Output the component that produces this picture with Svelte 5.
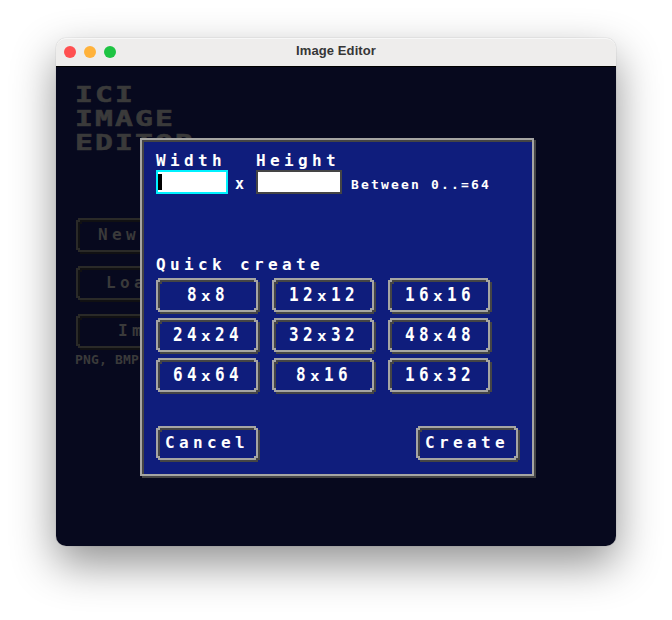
<script>
  const sizes = ['8x8', '12x12', '16x16', '24x24', '32x32', '48x48', '64x64', '8x16', '16x32'];

  // Stepped-corner outline made of two-pixel blocks.
  function outline(w, h, o) {
    const r = (x, y, a, b) => `M${x + o} ${y + o}h${a}v${b}h${-a}z`;
    return (
      r(2, 0, w - 4, 2) + r(2, h - 2, w - 4, 2) +
      r(0, 2, 2, h - 4) + r(w - 2, 2, 2, h - 4) +
      r(2, 2, 2, 2) + r(w - 4, 2, 2, 2) + r(2, h - 4, 2, 2) + r(w - 4, h - 4, 2, 2)
    );
  }
</script>

{#snippet frame(w)}
  <svg class="frame" width={w + 2} height="36" shape-rendering="crispEdges" aria-hidden="true">
    <path class="shade" d={outline(w, 34, 2)} />
    <path class="edge" d={outline(w, 34, 0)} />
  </svg>
{/snippet}

<main class="desktop">
  <section class="window">
    <header>
      <div class="lights"><i class="close"></i><i class="minimize"></i><i class="zoom"></i></div>
      <h1>Image Editor</h1>
    </header>
    <div class="content">
      <div class="menu">
        <h2><span>ICI</span><span>IMAGE</span><span>EDITOR</span></h2>
        <button class="new">{@render frame(182)}<span>New</span></button>
        <button class="load">{@render frame(182)}<span>Load</span></button>
        <button class="import">{@render frame(182)}<span>Import</span></button>
        <p>PNG, BMP</p>
      </div>
      <div class="dialog">
        <div class="fields">
          <div class="field first">
            <span class="label">Width</span>
            <div class="input focused"><i class="caret"></i></div>
          </div>
          <span class="times">x</span>
          <div class="field second">
            <span class="label">Height</span>
            <div class="input"></div>
          </div>
          <span class="hint">Between 0..=64</span>
        </div>
        <div class="label quick">Quick create</div>
        <div class="grid">
          {#each sizes as size}
            <button class="size">{@render frame(102)}<span class="digits">{size.split('x')[0]}<small>x</small>{size.split('x')[1]}</span></button>
          {/each}
        </div>
        <footer>
          <button>{@render frame(102)}<span>Cancel</span></button>
          <button>{@render frame(102)}<span>Create</span></button>
        </footer>
      </div>
    </div>
  </section>
</main>

<style>
  :global(body) { margin: 0; background: #fff; }
  * { box-sizing: border-box; }
  .desktop {
    width: 672px;
    height: 620px;
    padding: 38px 56px 74px;
    overflow: hidden;
    background: #fff;
    font-family: "DejaVu Sans Mono", monospace;
    font-weight: 700;
  }
  .window {
    height: 508px;
    border-radius: 10px;
    box-shadow: 0 0 1px rgba(0, 0, 0, 0.4), 0 18px 44px rgba(0, 0, 0, 0.43);
  }
  header {
    height: 28px;
    display: grid;
    grid-template-columns: 80px 1fr 80px;
    align-items: center;
    background: #eeedec;
    border-radius: 10px 10px 0 0;
    border-top: 1px solid #f7f7f7;
  }
  .lights { display: flex; gap: 8px; padding: 0 0 1px 8px; }
  .lights i { width: 12px; height: 12px; border-radius: 50%; }
  .close { background: #ff5050; }
  .minimize { background: #ffb23a; }
  .zoom { background: #1ec443; }
  h1 {
    margin: -3px 0 0;
    text-align: center;
    font: 700 13px/24px "Liberation Sans", Arial, sans-serif;
    letter-spacing: 0.1px;
    color: #363636;
  }
  .content {
    position: relative;
    height: 480px;
    overflow: hidden;
    padding: 16px 20px;
    background: #07091e;
    border-radius: 0 0 10px 10px;
    border-top: 1px solid #000;
  }
  .menu { display: flex; flex-direction: column; width: 182px; color: #3a3a3a; }
  h2 {
    display: flex;
    flex-direction: column;
    height: 72px;
    margin: 0 0 63px -1px;
    font-size: 22px;
    line-height: 24px;
    letter-spacing: 1.58px;
    transform: scaleX(1.35);
    transform-origin: 0 0;
    -webkit-text-stroke: 0.6px #3a3a3a;
  }
  button {
    position: relative;
    display: flex;
    justify-content: center;
    width: 102px;
    height: 34px;
    padding: 0;
    border: 0;
    background: none;
    color: inherit;
    font: 700 16px/34px "DejaVu Sans Mono", monospace;
    letter-spacing: 4.37px;
  }
  .frame { position: absolute; inset: 0 auto auto 0; overflow: visible; }
  .edge { fill: #a5a5a3; }
  .shade { fill: #454545; }
  .menu button { width: 182px; margin-bottom: 14px; justify-content: flex-start; }
  .menu .edge { fill: #2a2a28; }
  .menu .shade { fill: #111113; }
  .menu .new { padding-left: 22px; }
  .menu .load { padding-left: 30px; }
  .menu .import { padding-left: 42px; }
  .menu p { margin: -11px 0 0 -1px; font-size: 13px; line-height: 18px; letter-spacing: 0.17px; }
  .dialog {
    position: absolute;
    left: 84px;
    top: 71px;
    width: 394px;
    height: 338px;
    padding: 12px 14px 14px;
    background: #0f1d7c;
    border: 2px solid #a5a5a3;
    box-shadow: 2px 2px 0 #454545, inset 2px 2px 0 #454545;
    color: #fff;
  }
  .fields { display: flex; height: 42px; }
  .field { display: flex; flex-direction: column; }
  .first { width: 72px; }
  .second { width: 86px; }
  .label { height: 18px; font-size: 16px; line-height: 17px; letter-spacing: 4.37px; white-space: nowrap; }
  .input { height: 24px; padding: 2px 0 0 1px; background: #fff; border: 2px solid #454545; }
  .focused { padding-left: 0; border-color: #00f2ff; }
  .caret { display: block; width: 4px; height: 16px; background: #000; }
  .times { width: 28px; padding: 22px 0 0 7px; font-size: 15px; line-height: 20px; }
  .hint { padding: 23px 0 0 9px; font-size: 13px; line-height: 20px; letter-spacing: 2.17px; white-space: nowrap; }
  .quick { margin-top: 62px; height: 22px; }
  .grid { display: grid; grid-template-columns: repeat(3, 102px); gap: 6px 14px; }
  .digits { padding-left: 2px; transform: scaleY(1.2); }
  .digits small { display: inline-block; font-size: 16px; transform: scaleY(0.75); transform-origin: 50% 62%; }
  footer { display: flex; justify-content: space-between; margin-top: 34px; }
</style>
